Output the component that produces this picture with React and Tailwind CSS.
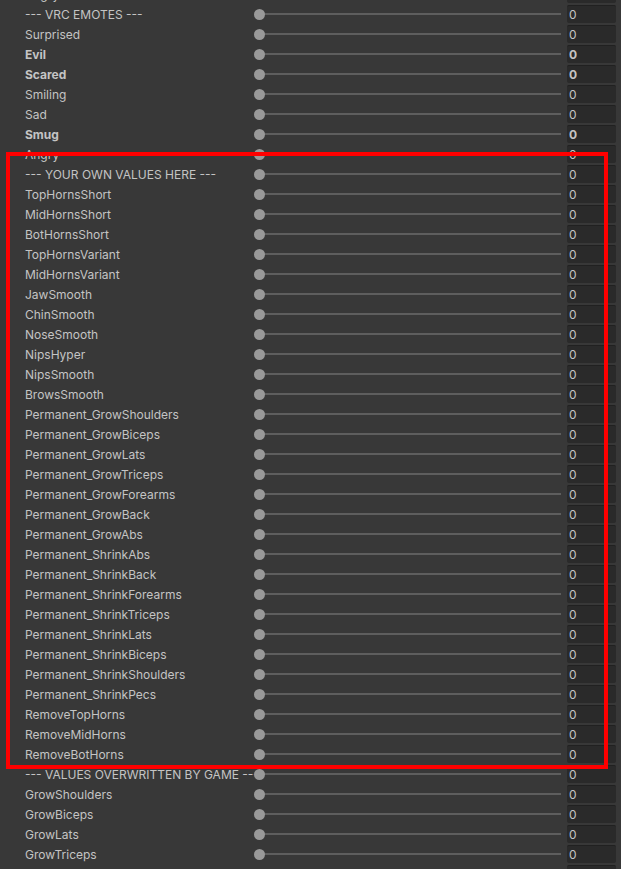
import React from "react";

const rows = [
  { l: "Angry" },
  { l: "--- VRC EMOTES ---" },
  { l: "Surprised" },
  { l: "Evil", b: true },
  { l: "Scared", b: true },
  { l: "Smiling" },
  { l: "Sad" },
  { l: "Smug", b: true },
  { l: "Angry" },
  { l: "--- YOUR OWN VALUES HERE ---" },
  { l: "TopHornsShort" },
  { l: "MidHornsShort" },
  { l: "BotHornsShort" },
  { l: "TopHornsVariant" },
  { l: "MidHornsVariant" },
  { l: "JawSmooth" },
  { l: "ChinSmooth" },
  { l: "NoseSmooth" },
  { l: "NipsHyper" },
  { l: "NipsSmooth" },
  { l: "BrowsSmooth" },
  { l: "Permanent_GrowShoulders" },
  { l: "Permanent_GrowBiceps" },
  { l: "Permanent_GrowLats" },
  { l: "Permanent_GrowTriceps" },
  { l: "Permanent_GrowForearms" },
  { l: "Permanent_GrowBack" },
  { l: "Permanent_GrowAbs" },
  { l: "Permanent_ShrinkAbs" },
  { l: "Permanent_ShrinkBack" },
  { l: "Permanent_ShrinkForearms" },
  { l: "Permanent_ShrinkTriceps" },
  { l: "Permanent_ShrinkLats" },
  { l: "Permanent_ShrinkBiceps" },
  { l: "Permanent_ShrinkShoulders" },
  { l: "Permanent_ShrinkPecs" },
  { l: "RemoveTopHorns" },
  { l: "RemoveMidHorns" },
  { l: "RemoveBotHorns" },
  { l: "--- VALUES OVERWRITTEN BY GAME ---" },
  { l: "GrowShoulders" },
  { l: "GrowBiceps" },
  { l: "GrowLats" },
  { l: "GrowTriceps" },
  { l: "GrowForearms" },
];

function Row({ l, b }) {
  return (
    <div className="flex h-[20px] items-center">
      <div
        className={`w-[254px] shrink-0 overflow-hidden whitespace-nowrap pl-[25px] pt-[1px] text-[12px] leading-[20px] text-[#c4c4c4] ${b ? "font-bold" : ""}`}
      >
        {l}
      </div>
      <div className="relative h-[20px] w-[309px] shrink-0">
        <div className="absolute left-[6px] right-[2px] top-[9px] h-[2px] bg-[#5e5e5e]" />
        <div className="absolute left-0 top-[5px] h-[11px] w-[11px] rounded-full bg-[#999999]" />
      </div>
      <div className="ml-[4px] flex h-[18px] w-[49px] shrink-0 items-center rounded-[2px] border-t border-[#212121] bg-[#2a2a2a] pl-[2px] pt-[1px] text-[12px] text-[#c4c4c4]">
        <span className={b ? "font-bold" : ""}>0</span>
      </div>
    </div>
  );
}

export default function App() {
  return (
    <div
      className="relative h-[869px] w-[621px] overflow-hidden bg-[#383838]"
      style={{ fontFamily: "Inter, 'Noto Sans', sans-serif" }}
    >
      <div className="mt-[-16px] flex flex-col">
        {rows.map((r, i) => (
          <Row key={i} {...r} />
        ))}
      </div>
      <div className="pointer-events-none absolute left-[6px] top-[152px] h-[617px] w-[602px] border-[4px] border-[#ff0000]" />
    </div>
  );
}
